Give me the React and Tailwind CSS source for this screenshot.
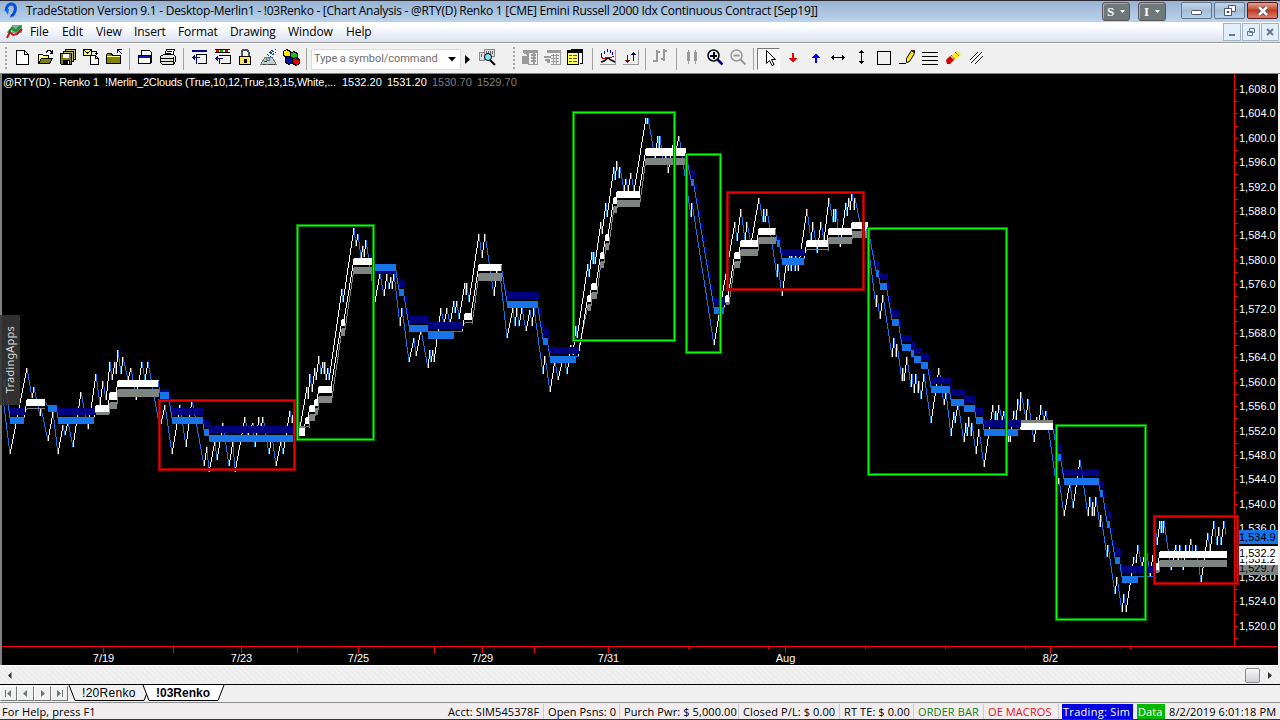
import React from "react";

const BLUE = "#1874e8";
const NAVY = "#00007f";
const GREY = "#7f8583";

// renko swing points, x / y in chart pixels
const swings = [
    3,398, 10,454, 27,368, 32,398, 34,387, 40,416, 41,408, 48,441, 53,412, 58,454, 63,425, 65,435, 68,422, 73,447,
    81,392, 88,429, 96,374, 100,405, 103,381, 106,400, 110,362, 112,380, 115,362, 116,374, 118,350, 121,374, 123,357,
    128,380, 131,368, 136,400, 142,362, 145,380, 148,362, 160,429, 165,405, 172,454, 180,405, 186,447, 192,399,
    204,466, 207,447, 209,472, 215,441, 217,460, 223,423, 229,466, 233,441, 235,472, 245,417, 248,435, 253,423,
    255,447, 259,417, 261,428, 263,417, 269,454, 272,435, 276,466, 281,441, 283,454, 290,411, 292,423, 295,399,
    300,428, 307,387, 308,399, 310,374, 312,392, 315,368, 316,380, 319,356, 321,374, 323,362, 324,374, 325,362, 326,380,
    328,368, 329,380, 342,289, 343,302, 354,228, 356,246, 358,234, 361,258, 363,246, 364,257, 366,240, 375,302, 380,273,
    384,296, 387,274, 389,289, 391,277, 392,289, 394,273, 400,326, 402,308, 409,362, 414,338, 416,356, 421,330,
    428,368, 430,350, 431,362, 433,350, 434,362, 441,308, 444,325, 447,308, 450,325, 454,301, 455,313, 457,301, 459,319,
    465,283, 466,295, 467,283, 469,302, 479,234, 482,258, 485,234, 494,296, 497,270, 499,280, 500,274, 507,338, 513,308, 515,326,
    517,308, 519,326, 522,308, 526,331, 530,310, 532,326, 534,308, 543,374, 545,356, 550,392, 555,360, 558,380,
    562,362, 564,357, 567,374, 571,345, 573,355, 576,326, 577,338, 588,264, 589,277, 592,252, 593,264, 594,252,
    595,264, 601,222, 602,234, 606,203, 607,217, 614,167, 615,180, 617,161, 619,178, 620,167, 624,191, 626,179,
    628,191, 631,173, 634,191, 646,118, 647,124, 648,118, 655,158, 658,136, 659,148, 660,136, 663,163, 666,155, 668,173, 673,145, 675,155,
    679,136, 681,148, 691,217, 692,203, 714,345, 722,297, 735,222, 737,241, 741,209, 745,241, 747,222, 751,244,
    759,198, 763,222, 764,209, 765,222, 767,209, 777,277, 778,264, 782,296, 787,258, 788,271, 790,256, 791,271, 792,256,
    795,271, 796,256, 798,271, 807,209, 811,241, 813,222, 817,253, 821,222, 824,241, 829,198, 833,222, 834,209,
    835,222, 836,209, 840,247, 846,203, 847,216, 849,198, 850,210, 852,192, 854,210, 855,198, 861,228, 863,240, 866,228,
    876,307, 877,295, 880,319, 883,295, 892,357, 894,338, 896,357, 897,344, 902,381, 903,368, 904,381, 907,357,
    911,387, 912,374, 914,393, 916,374, 918,393, 919,381, 921,399, 924,374, 931,423, 939,368, 944,405, 946,392,
    951,436, 954,412, 955,423, 958,403, 964,442, 966,423, 967,436, 969,417, 971,436, 972,423, 976,454, 979,429,
    984,467, 993,405, 995,420, 996,411, 997,420, 999,405, 1002,420, 1004,411, 1008,442, 1009,430, 1010,442, 1014,411, 1016,420,
    1018,399, 1020,411, 1021,392, 1026,420, 1028,399, 1034,442, 1037,417, 1039,424, 1041,405, 1044,420, 1046,411,
    1057,490, 1059,478, 1064,516, 1070,482, 1073,508, 1080,460, 1088,516, 1090,497, 1092,516, 1093,502, 1094,516,
    1096,497, 1100,527, 1101,515, 1107,557, 1108,545, 1115,594, 1117,577, 1122,612, 1124,594, 1126,612, 1134,557,
    1136,563, 1138,545, 1142,568, 1146,545, 1150,577, 1156,533, 1157,545, 1160,521, 1161,533, 1162,521, 1163,533, 1164,521,
    1171,570, 1176,545, 1178,560, 1180,545, 1183,570, 1186,545, 1188,557, 1191,539, 1194,557, 1196,545, 1201,582,
    1208,533, 1210,551, 1214,521, 1217,545, 1219,527, 1221,545, 1224,521, 1226,535,
];

// x, width, fast y, slow y, up, fast height, slow height, fast width
const clouds = [
    [3, 3, 380, 371, 0],
    [10, 15, 417, 408, 0, 7, 7, 14],
    [27, 18, 399, 408, 1, 7, 1],
    [48, 9, 405, 408, 0, 7, 1],
    [58, 37, 417, 408, 0, 7, 7, 36],
    [96, 13, 405, 412, 1, 7, 3],
    [110, 7, 392, 402, 1, 8, 7],
    [118, 41, 380, 389, 1, 7, 8, 40],
    [160, 9, 392, 389, 0, 7, 3],
    [172, 31, 417, 408, 0],
    [204, 5, 429, 420, 0],
    [209, 85, 435, 426, 0, 7, 7, 84],
    [297, 8, 428, 426, 1, 8, 3],
    [306, 3, 417, 426, 1, 7, 1],
    [310, 5, 405, 414, 1],
    [315, 3, 399, 408, 1],
    [319, 13, 386, 396, 1],
    [342, 3, 319, 328, 1, 7, 8],
    [354, 20, 258, 267, 1, 7, 7, 18],
    [374, 22, 264, 271, 0, 7, 3],
    [399, 5, 289, 280, 0],
    [409, 19, 325, 316, 0],
    [428, 35, 331, 322, 0, 8, 7, 26],
    [465, 7, 313, 322, 1, 7, 1],
    [479, 23, 264, 273, 1, 7, 8, 22],
    [507, 31, 301, 292, 0],
    [543, 5, 338, 328, 0],
    [550, 29, 356, 347, 0, 7, 7, 26],
    [588, 3, 295, 304, 1],
    [592, 5, 283, 292, 1],
    [601, 3, 252, 261, 1],
    [606, 3, 234, 243, 1],
    [614, 3, 197, 206, 1],
    [617, 23, 191, 200, 1],
    [646, 40, 148, 158, 1, 8, 7],
    [691, 3, 179, 170, 0],
    [714, 11, 307, 298, 0, 7, 7, 10],
    [726, 3, 295, 302, 1, 7, 3],
    [735, 5, 252, 261, 1],
    [741, 17, 240, 249, 1],
    [759, 17, 228, 237, 1, 7, 7, 16],
    [777, 3, 240, 237, 0, 7, 4],
    [782, 23, 258, 249, 0, 7, 7, 22],
    [807, 21, 240, 249, 1, 7, 1],
    [829, 23, 228, 237, 1],
    [852, 16, 222, 231, 1],
    [876, 3, 270, 261, 0],
    [880, 7, 283, 273, 0],
    [892, 7, 319, 310, 0],
    [902, 9, 344, 335, 0],
    [911, 3, 350, 341, 0],
    [914, 7, 356, 347, 0],
    [921, 7, 362, 353, 0],
    [931, 19, 386, 377, 0],
    [951, 13, 399, 389, 0],
    [964, 11, 405, 396, 0],
    [976, 7, 417, 408, 0],
    [984, 37, 429, 420, 0, 7, 7, 34],
    [1021, 32, 423, 420, 1, 7, 3],
    [1058, 3, 454, 444, 0],
    [1064, 35, 478, 469, 0],
    [1100, 3, 490, 481, 0],
    [1107, 3, 521, 511, 0],
    [1115, 5, 557, 548, 0],
    [1122, 32, 576, 566, 0, 7, 7, 16],
    [1156, 3, 563, 570, 1, 7, 3],
    [1160, 67, 551, 560, 1],
];

// x1, y1, x2, y2, green
const zones = [
    [159, 400, 294, 469, 0],
    [297, 225, 373, 439, 1],
    [573, 112, 674, 340, 1],
    [686, 154, 720, 352, 1],
    [727, 192, 863, 289, 0],
    [868, 228, 1006, 474, 1],
    [1056, 425, 1145, 619, 1],
    [1154, 516, 1237, 583, 0],
];

const prices = Array.from({ length: 23 }, (_, i) => 1608 - i * 4);
const dates = [[103, "7/19"], [241, "7/23"], [358, "7/25"], [482, "7/29"], [608, "7/31"], [785, "Aug"], [1050, "8/2"]];
const longTicks = [103, 173, 241, 297, 358, 434, 482, 534, 608, 785, 1050];
const shortTicks = [688, 768, 865, 945, 1025, 1130];

// one vertical stroke per pixel column
const stairs = (x1, y1, x2, y2) => {
    const n = Math.max(1, x2 - x1);
    const step = (y2 - y1) / n;
    let d = "";
    for (let i = 0; i < n; i++) {
        const a = Math.round(y1 + step * i);
        let b = Math.round(y1 + step * (i + 1));
        if (a === b) b = a + 1;
        d += `M${x1 + i + 0.5} ${a}V${b}`;
    }
    return d;
};

let upPath = "";
let downPath = "";
for (let i = 0; i < swings.length - 2; i += 2) {
    const [x1, y1, x2, y2] = swings.slice(i, i + 4);
    if (y2 < y1) upPath += stairs(x1, y1, x2, y2);
    else downPath += stairs(x1, y1, x2, y2);
}

const Chart = () => (
    <svg width="1276" height="591" viewBox="2 74 1276 591" className="block bg-black" shapeRendering="crispEdges">
        <path d={downPath} stroke={BLUE} />
        <path d={upPath} stroke="#fff" />
        {clouds.slice(1).map((c, i) => {
            const p = clouds[i];
            return (
                <g key={c[0]}>
                    <path d={stairs(p[0] + p[1], p[3] + (p[4] ? 2 : 1), c[0], c[3] + 1)} stroke={c[4] ? GREY : NAVY} />
                    <path d={stairs(p[0] + p[1] - 1, p[2] + 1, c[0], c[2] + 1)} stroke={c[4] ? "#fff" : BLUE} />
                </g>
            );
        })}
        {clouds.map(([x, w, fast, slow, up, fh = 7, sh = 7, fw = w]) => (
            <g key={x}>
                <rect x={x} y={slow} width={w} height={sh} fill={up ? GREY : NAVY} />
                <rect x={x} y={fast} width={w} height={1} fill={up ? "#fff" : BLUE} />
                <rect x={x} y={fast} width={fw} height={fh} fill={up ? "#fff" : BLUE} />
            </g>
        ))}

        <path d="M1234.5 74V646M2 646.5H1278" stroke="#f00" />
        {Array.from({ length: 46 }, (_, i) => (
            <path key={i} d={`M1235 ${Math.round(89 + i * 12.2) + 0.5}h3`} stroke="#f00" />
        ))}
        {longTicks.map((x) => <path key={x} d={`M${x + 0.5} 647v6`} stroke="#f00" />)}
        {shortTicks.map((x) => <path key={x} d={`M${x + 0.5} 647v2`} stroke="#f00" />)}

        <g fontFamily="'Liberation Sans', Arial, sans-serif" fontSize="11" fill="#fff">
            {prices.map((p, i) => (
                <text key={p} x="1239" y={93 + i * 24.4}>{`1,${p - 1000}.0`}</text>
            ))}
            {dates.map(([x, label]) => (
                <text key={label} x={x + 0.5} y="662" textAnchor="middle">{label}</text>
            ))}
            <rect x="1239" y="565" width="39" height="10" fill={GREY} />
            <text x="1239" y="572" fill="#000">1,529.7</text>
            <rect x="1239" y="546" width="39" height="19" fill="#fff" />
            <text x="1239" y="563" fill="#000">1,531.2</text>
            <rect x="1239" y="546" width="39" height="13" fill="#fff" />
            <text x="1239" y="557" fill="#000">1,532.2</text>
            <rect x="1239" y="530" width="39" height="14" fill={BLUE} />
            <text x="1239" y="541" fill="#000">1,534.9</text>
        </g>

        {zones.map(([x1, y1, x2, y2, green]) => (
            <g key={x1} fill="none">
                <rect x={x1 + 0.5} y={y1 + 0.5} width={x2 - x1} height={y2 - y1} strokeWidth="3" stroke={green ? "#008a00" : "#a00000"} />
                <rect x={x1 + 0.5} y={y1 + 0.5} width={x2 - x1} height={y2 - y1} stroke={green ? "#00ff00" : "#f00000"} />
            </g>
        ))}

        <g fontFamily="'Liberation Sans', Arial, sans-serif" fontSize="11">
            <text x="3" y="86" fill="#fff" textLength="96">@RTY(D) - Renko 1</text>
            <text x="105" y="86" fill="#fff" textLength="231">!Merlin_2Clouds (True,10,12,True,13,15,White,...</text>
            <text x="342" y="86" fill="#fff">1532.20</text>
            <text x="387" y="86" fill="#fff">1531.20</text>
            <text x="432" y="86" fill="#7f7f7f">1530.70</text>
            <text x="477" y="86" fill="#7f7f7f">1529.70</text>
        </g>
    </svg>
);

const Slot = ({ children, pressed }) => (
    <div className={`flex h-[22px] w-[23px] shrink-0 items-start ${pressed ? "border border-b-white border-l-[#777] border-r-white border-t-[#777] bg-[#f7f7f7] pl-[2px]" : "pl-[3px]"}`}>
        <svg width="18" height="18" viewBox="0 0 18 18" fill="none" stroke="#000" shapeRendering="crispEdges" className="shrink-0">
            {children}
        </svg>
    </div>
);

const Sep = ({ className = "ml-1 mr-[3px]" }) => <div className={`h-[22px] w-px shrink-0 bg-[#a0a0a0] ${className}`} />;

const Grip = ({ className }) => (
    <div className={`h-[24px] w-[2px] shrink-0 bg-[repeating-linear-gradient(to_bottom,#a5a5a5_0_2px,transparent_2px_4px)] ${className}`} />
);

const Toolbar = () => (
    <div className="flex h-[30px] items-center bg-[#f0f0f0]">
        <Grip className="ml-[5px] mr-[3px]" />
        <Slot><path d="M3.5 2.5h8l4 4v10h-12zM11.5 2.5v4h4" fill="#fff" /></Slot>
        <Slot>
            <path d="M2.5 15.5v-9h4l1 1h5v3" fill="#ffff80" />
            <path d="M2.5 15.5l3-5h11l-3 5z" fill="#80800a" />
            <path d="M10 4.5l2-2h2l2 2M16.5 2v4M14 5.5h3" />
        </Slot>
        <Slot>
            <path d="M6.5 1.5h10v10h-10z" fill="#c8c070" />
            <path d="M4.5 3.5h10v10h-10z" fill="#c8c070" />
            <path d="M1.5 5.5h11v11h-10l-1-1z" fill="#80800a" />
            <path d="M4 6h6v4h-6z" fill="#fff" stroke="none" />
            <path d="M4 12h7v4h-7z" fill="#000" stroke="none" />
            <path d="M9 13h1v3h-1z" fill="#fff" stroke="none" />
        </Slot>
        <Slot>
            <path d="M1.5 1.5h8v6h-8z" fill="#ffff80" />
            <path d="M1.5 2l4 3 4-3M10 3.5h4v3M12.5 5.5h3" />
            <path d="M8.5 7.5h5l3 3v6h-8z" fill="#fff" />
            <path d="M13.5 7.5v3h3" />
        </Slot>
        <Slot>
            <path d="M1.5 15.5v-9l1-1h4l1 2h8v8z" fill="#80800a" />
            <path d="M2 8.5h13" stroke="#ffff80" />
            <path d="M12.5 1.5h4M12.5 1v4M13 2l4 4" stroke="#00008b" />
        </Slot>
        <Sep />
        <Slot>
            <path d="M5.5 2.5h8l2 2v10h-10z" fill="#fff" />
            <path d="M2.5 7.5h12v8h-12z" fill="#fff" />
            <path d="M3 9h11" stroke="#0018c8" strokeWidth="2" />
        </Slot>
        <Slot>
            <path d="M5.5 7.5l2-6h8l-2 6z" fill="#fff" />
            <path d="M1.5 8.5l3-2h10l2 2v5l-2 3h-11l-2-2z" fill="#e4e4e4" />
            <path d="M8 3.5h5M7 5.5h5M2 10.5h13M2 13.5h12M15 9l-1 7" />
            <path d="M11 12.5h2" stroke="#e0d000" />
        </Slot>
        <Sep className="ml-1 mr-[3px]" />
        <Slot>
            <path d="M2 3h15" stroke="#00008b" strokeWidth="2" />
            <path d="M6 8.500V6.500H16.500M7.500 15.500H16M16.500 7v9" />
            <path d="M2 9.500h8M4.500 7v5M3.500 8v3M6.500 9v7" stroke="#00008b" />
        </Slot>
        <Slot>
            <path d="M2 1.500h15M2 4.500h15" />
            <path d="M3 3h3" stroke="#d00" strokeWidth="2" />
            <path d="M7 3h3" stroke="#0a0" strokeWidth="2" />
            <path d="M12 3h3" stroke="#d00" strokeWidth="2" />
            <path d="M6 7.5h11v8h-9.500" />
            <path d="M2 10.500h8M4.500 8v5M3.500 9v3M6.500 10v6" stroke="#00008b" />
        </Slot>
        <Slot>
            <path d="M5.500 8V4l2-2.500h3l2 2.500v4" stroke="#555" strokeWidth="2" />
            <path d="M3.500 8.500h11v8h-11z" fill="#ffe45c" />
            <path d="M8 11h2v3h-2z" fill="#000" />
        </Slot>
        <Slot>
            <path d="M2 16l4-7h7l4 7z" fill="#c4d0d0" stroke="#777" />
            <path d="M4 16.500h3M9 16.500h7M5 13.500h3" stroke="#444" />
            <circle cx="9" cy="11" r="2" fill="#30d8e8" stroke="#777" />
            <path d="M8 7l7-6M9 8l8-7M11 9l6-5" stroke="#234a9a" strokeDasharray="2 1" />
        </Slot>
        <Slot>
            <path d="M1.500 3.500l3-2 4 2v4l-3 2-4-2z" fill="#ffe600" />
            <path d="M8.500 5.500l3-2 4 2v4l-3 1-4-1z" fill="#18c020" />
            <path d="M3.500 9.500l3-1 4 2v4l-3 2-4-2z" fill="#00189a" />
            <path d="M10.500 11.500l3-2 4 2v4l-3 2-4-2z" fill="#e00000" />
        </Slot>
        <Sep className="ml-1 mr-[4px]" />
        <div className="flex h-[21px] w-[150px] shrink-0 items-center border border-[#dcdcdc] bg-white pl-[2px]">
            <span className="w-[134px] whitespace-nowrap font-['Roboto'] text-[11px] tracking-[-0.05px] text-[#6d6d6d]">Type a symbol/command</span>
            <svg width="8" height="5" viewBox="0 0 8 5"><path d="M0 0h8L4 4.500z" /></svg>
        </div>
        <div className="flex w-3 shrink-0 justify-center">
            <svg width="5" height="9" viewBox="0 0 5 9"><path d="M0 0l5 4.500L0 9z" /></svg>
        </div>
        <div className="ml-[2px] mr-[3px] w-[23px] shrink-0">
            <Slot>
                <path d="M1.500 4.500h5v8h-5zM6.500 1.500h10v7h-10z" fill="#ddd" stroke="#888" />
                <path d="M8.500 3v3M10.500 3v4M12.500 3v4M14.500 3v3M3.500 6v3" stroke="#666" />
                <circle cx="10" cy="9" r="3.500" fill="#7de8f0" shapeRendering="auto" />
                <path d="M12 12l5 5" strokeWidth="2" shapeRendering="auto" />
            </Slot>
        </div>
        <Grip className="ml-[12px] mr-[2px]" />
        <Slot>
            <path d="M3 2.500h14v14h-9" stroke="#999" />
            <path d="M3 4h14M11 7h5M11 10h5M11 13h5M13.500 5v11" stroke="#999" strokeWidth="2" />
            <path d="M2 8h6v7h-6zM4 5h4v3" fill="#999" stroke="#999" />
        </Slot>
        <Slot>
            <path d="M4 2.500h13v14h-9" stroke="#999" />
            <path d="M4 4h13" stroke="#999" strokeWidth="2" />
            <path d="M8 7.500h8M8 10.500h8M8 13.500h8M10.500 6v10M13.500 6v10" stroke="#999" />
            <path d="M1 9h7M2 12h5M4 14h3" stroke="#999" strokeWidth="2" />
        </Slot>
        <Slot>
            <path d="M4.500 1.500h12v14h-3" fill="#fff" />
            <path d="M1.500 3.500h11v13h-11z" fill="#ffff60" />
            <path d="M1 3h16" strokeWidth="3" />
            <path d="M3 7.500h3M7 7.500h4M3 10.500h3M7 10.500h4M3 13.500h3M7 13.500h4" stroke="#555" />
        </Slot>
        <Sep className="ml-[6px] mr-[3px]" />
        <Slot>
            <path d="M1 16.500h16M16.500 2v14" stroke="#999" />
            <path d="M2 14l3-1 4-3 3 2 4 2" shapeRendering="auto" strokeWidth="1.500" />
            <path d="M2.500 5v4M5.500 3v3M8.500 1v3M11.500 2v3M13.500 4v3" stroke="#0000d0" />
            <path d="M2 9l3 2 3-2 3 1 4-2" stroke="#c00000" />
        </Slot>
        <Slot>
            <path d="M1 16.500h16M16.500 2v14" stroke="#999" />
            <path d="M5.500 7v8M3 12.500h5M4 13.500h3" stroke="#900000" />
            <path d="M11.500 4v9M9 6.500h5M10 5.500h3" stroke="#00008b" />
        </Slot>
        <Sep className="ml-[3px] mr-[2px]" />
        <Slot><path d="M6 2v12M2 13h4M6 4h3M13 1v12M10 11h3M13 3h3" stroke="#999" strokeWidth="2" /></Slot>
        <Sep className="ml-[5px] mr-[3px]" />
        <Slot>
            <path d="M5.500 2v14M12.500 2v14" stroke="#999" />
            <path d="M4 4h3v9h-3zM11 4h3v9h-3z" fill="#999" stroke="none" />
        </Slot>
        <Slot>
            <circle cx="7.500" cy="7.500" r="5.500" fill="#d8f8fa" strokeWidth="1.500" shapeRendering="auto" />
            <path d="M4 7.500h7M7.500 4v7" strokeWidth="2" />
            <path d="M11.500 11.500l5 5" stroke="#00008b" strokeWidth="2.500" shapeRendering="auto" />
        </Slot>
        <Slot>
            <g stroke="#999" shapeRendering="auto">
                <circle cx="7.500" cy="7.500" r="5.500" strokeWidth="1.500" />
                <path d="M4.500 7.500h6M11.500 11.500l5 5" strokeWidth="2" />
            </g>
        </Slot>
        <Sep className="ml-[4px] mr-[3px]" />
        <Slot pressed>
            <path d="M6.500 1.500v13l3-3 2.500 5 2-1-2.500-5h4z" fill="#fff" shapeRendering="auto" />
        </Slot>
        <Slot>
            <path d="M10 5v6" stroke="#f00000" strokeWidth="2" />
            <path d="M6 10h8l-4 5z" fill="#f00000" stroke="none" />
        </Slot>
        <Slot>
            <path d="M10 9v6" stroke="#0000ff" strokeWidth="2" />
            <path d="M6 10h8l-4-5z" fill="#0000ff" stroke="none" />
        </Slot>
        <Slot><path d="M2 9.500h14M4.500 7v5M3.500 8v3M13.500 7v5M14.500 8v3" /></Slot>
        <Slot><path d="M9.500 2v14M7 4.500h5M8 3.500h3M7 13.500h5M8 14.500h3" /></Slot>
        <Slot><path d="M2.500 3.500h13v13h-13z" /></Slot>
        <Slot>
            <path d="M1 15.500h7" />
            <path d="M8.500 14.500v-4l5-8h3v3l-5 8z" fill="#ffe61a" shapeRendering="auto" />
            <path d="M14 3l2 1" stroke="#900000" strokeWidth="2" />
        </Slot>
        <Slot><path d="M1 4.500h16M1 8.500h16M1 12.500h16M1 16.500h16" /></Slot>
        <Slot>
            <g stroke="none" shapeRendering="auto">
                <path d="M7 8l6-5 4 3-6 6z" fill="#ffe61a" />
                <path d="M2 12l4-4 4 4-4 4H3z" fill="#d00000" />
                <path d="M7 7l4 5M11 4l4 4" stroke="#222" strokeDasharray="1 1" />
            </g>
        </Slot>
        <Slot><path d="M3 12l8-8M4 15l11-11M8 16l8-8" shapeRendering="auto" strokeWidth="0.900" /></Slot>
    </div>
);

const RoundButton = ({ label, className }) => (
    <div className={`flex h-[19px] w-[28px] items-center justify-center gap-[6px] rounded-[3px] border border-[#5b5560] bg-[#6f7977] shadow-[inset_1px_1px_0_#a5adab] ${className}`}>
        <span className="font-['Liberation_Serif'] text-[13px] font-bold leading-none text-white">{label}</span>
        <svg width="5" height="3" viewBox="0 0 5 3"><path d="M0 0h5L2.500 3z" fill="#fff" /></svg>
    </div>
);

const TitleBar = () => (
    <div className="flex h-[22px] items-start border-t border-[#2b2b33] bg-linear-to-b from-[#98b3d3] to-[#bbd3eb]">
        <svg width="18" height="18" viewBox="0 0 18 18" className="ml-[2px] mt-px">
            <path d="M4 9C4 4 7 1.500 10 2c5 1 4 8 0 12" fill="none" stroke="#0a4fe0" strokeWidth="3" />
            <path d="M3 8l3 5 1-6z" fill="#0a66f5" />
            <path d="M8 16l1-4 3 1z" fill="#0a3fc0" />
        </svg>
        <span className="ml-[6px] mt-px whitespace-nowrap font-['Open_Sans'] text-[12px] leading-[18px] tracking-[-0.27px]">
            TradeStation Version 9.1 - Desktop-Merlin1 - !03Renko - [Chart Analysis - @RTY(D) Renko 1 [CME] Emini Russell 2000 Idx Continuous Contract [Sep19]]
        </span>
        <div className="ml-auto mr-[2px] flex">
            <RoundButton label="S" className="mr-[8px] mt-px" />
            <RoundButton label="I" className="mr-[15px] mt-px" />
            <div className="mr-[2px] mt-px flex h-[17px] w-[31px] items-center justify-center rounded-[2px] border border-[#62758f] bg-linear-to-b from-[#c5d6e9] via-[#a5bdd8] to-[#b9d0ea]">
                <svg width="11" height="5" className="mt-1"><rect x=".5" y=".5" width="10" height="4" rx="1" fill="#fff" stroke="#4a5568" /></svg>
            </div>
            <div className="mr-[2px] mt-px flex h-[17px] w-[31px] items-center justify-center rounded-[2px] border border-[#62758f] bg-linear-to-b from-[#c5d6e9] via-[#a5bdd8] to-[#b9d0ea]">
                <svg width="12" height="11" fill="#fff" stroke="#4a5568"><path d="M4.500.5h7v6h-7z" /><path d="M.5 3.500h7v7h-7z" /><path d="M3 6.500h2v1h-2z" /></svg>
            </div>
            <div className="mt-px flex h-[17px] w-[31px] items-center justify-center rounded-[2px] border border-[#5a1a1a] bg-linear-to-b from-[#e0a090] via-[#c03a20] to-[#d88070]">
                <svg width="12" height="10"><path d="M2 1l8 8M10 1l-8 8" stroke="#444" strokeWidth="4" /><path d="M2 1l8 8M10 1l-8 8" stroke="#fff" strokeWidth="2.500" /></svg>
            </div>
        </div>
    </div>
);

const MdiButton = ({ children }) => (
    <div className="flex h-[18px] w-[18px] items-center justify-center border border-[#9fb3c8] bg-[#e2eef9]">
        <svg width="10" height="10" fill="none" stroke="#66798f">{children}</svg>
    </div>
);

const MenuBar = () => (
    <div className="flex h-[20px] items-center bg-linear-to-b from-white from-20% to-[#dce2f2] font-['Open_Sans'] text-[12px] tracking-[-0.1px]">
        <svg width="18" height="16" viewBox="0 0 18 16" className="ml-[6px] mr-[6px]">
            <path d="M6 1h10v8H6z" fill="#93a39b" />
            <path d="M2 9l4-5 4 3 5-5" stroke="#109a30" strokeWidth="2.500" fill="none" />
            <path d="M1 14l3-6 3 3 4-1 5-5" stroke="#d01010" strokeWidth="2" fill="none" />
        </svg>
        <span className="w-[32px]">File</span>
        <span className="w-[34px]">Edit</span>
        <span className="w-[38px]">View</span>
        <span className="w-[44px]">Insert</span>
        <span className="w-[52px]">Format</span>
        <span className="w-[58px]">Drawing</span>
        <span className="w-[58px]">Window</span>
        <span>Help</span>
        <div className="ml-auto mr-px flex gap-px">
            <MdiButton><path d="M2 8h6" strokeWidth="2" /></MdiButton>
            <MdiButton><path d="M3.500 1.500h5v4h-5zM1.500 4.500h5v4h-5z" fill="#e2eef9" /></MdiButton>
            <MdiButton><path d="M2 2l6 6M8 2l-6 6" strokeWidth="2" /></MdiButton>
        </div>
    </div>
);

const NavButton = ({ d }) => (
    <div className="flex h-[15px] w-[17px] items-center justify-center border border-b-[#777] border-l-white border-r-[#777] border-t-white bg-[#f0f0f0]">
        <svg width="9" height="7" viewBox="0 0 9 7" fill="#687876" stroke="none"><path d={d} /></svg>
    </div>
);

const ScrollBar = () => (
    <div className="flex h-[19px] items-center border-t border-white bg-[repeating-linear-gradient(45deg,#ececec_0_2px,#f1f1f1_2px_4px)] pl-[7px]">
        <svg width="5" height="7"><path d="M4.500 0v7L1 3.500z" fill="#333" /></svg>
        <div className="ml-auto mr-[8px] h-[15px] w-[15px] rounded-[2px] border border-[#8a8a8a] bg-linear-to-b from-[#f8f8f8] to-[#cfcfd4]" />
        <svg width="5" height="7" className="mr-[7px]"><path d="M0 0v7l4-3.500z" fill="#333" /></svg>
    </div>
);

const TabBar = () => (
    <div className="flex h-[18px] items-start border-t border-black bg-[#f0f0f0]">
        <div className="flex pt-px">
            <NavButton d="M1 0h1v7h-1zM7 0v7l-4-3.500z" />
            <NavButton d="M6 0v7l-4-3.500z" />
            <NavButton d="M3 0v7l4-3.500z" />
            <NavButton d="M7 0h1v7h-1zM2 0v7l4-3.500z" />
        </div>
        <div className="relative h-[17px] w-[160px]">
            <svg width="160" height="17" className="absolute left-0 top-0">
                <path d="M1 0l6 15.500h69l6-15.500" fill="#f0f0f0" stroke="#000" />
                <path d="M75 0l6 15.500h69l6-15.500" fill="#fff" stroke="#000" />
            </svg>
            <div className="relative flex font-['Liberation_Sans'] text-[12px] leading-[16px]">
                <span className="ml-[14px] w-[74px] tracking-[0.3px]">!20Renko</span>
                <span className="font-bold">!03Renko</span>
            </div>
        </div>
    </div>
);

const Cell = ({ className, children }) => (
    <div className={`h-[15px] shrink-0 whitespace-nowrap border-r border-[#cfcacc] ${className}`}>{children}</div>
);

const StatusBar = () => (
    <div className="flex h-[18px] items-start border-b border-t border-b-[#333] border-t-[#8c8c8c] bg-[#f1ecee] pt-px font-['Open_Sans'] text-[11px] leading-[16px] tracking-[0.1px]">
        <span className="w-[446px] pl-[2px]">For Help, press F1</span>
        <Cell className="w-[98px] pl-[2px]">Acct: SIM545378F</Cell>
        <Cell className="w-[76px] pl-1">Open Psns: 0</Cell>
        <Cell className="w-[119px] pl-1">Purch Pwr: $ 5,000.00</Cell>
        <Cell className="w-[101px] pl-1">Closed P/L: $ 0.00</Cell>
        <Cell className="w-[74px] pl-1">RT TE: $ 0.00</Cell>
        <Cell className="w-[70px] pl-1 text-[#148014]">ORDER BAR</Cell>
        <Cell className="w-[75px] pl-1 text-[#e81010]">OE MACROS</Cell>
        <div className="ml-[3px] h-[15px] w-[71px] shrink-0 whitespace-nowrap bg-[#0000e0] pl-px tracking-[0.3px] text-white">Trading: Sim</div>
        <div className="ml-1 h-[15px] w-[28px] shrink-0 bg-[#00b800] pl-px text-white">Data</div>
        <span className="ml-[4px] whitespace-nowrap">8/2/2019 6:01:18 PM</span>
    </div>
);

const App = () => {
    return (
        <div className="flex h-[720px] w-[1280px] flex-col overflow-hidden bg-[#f0f0f0] text-black">
            <TitleBar />
            <MenuBar />
            <div className="h-[2px] shrink-0 border-t border-[#9a9a9a] bg-white" />
            <div className="h-[29px] shrink-0">
                <Toolbar />
            </div>
            <div className="relative h-[592px] border-l-2 border-t border-[#808080]">
                <Chart />
                <div className="absolute -left-[2px] top-[241px] flex h-[90px] w-[20px] items-center justify-center bg-[#353535]/90">
                    <span className="rotate-180 font-['Noto_Sans'] text-[11px] tracking-[0.2px] text-[#d8d8d8] [writing-mode:vertical-rl]">TradingApps</span>
                </div>
            </div>
            <ScrollBar />
            <TabBar />
            <StatusBar />
        </div>
    );
};

export default App;
